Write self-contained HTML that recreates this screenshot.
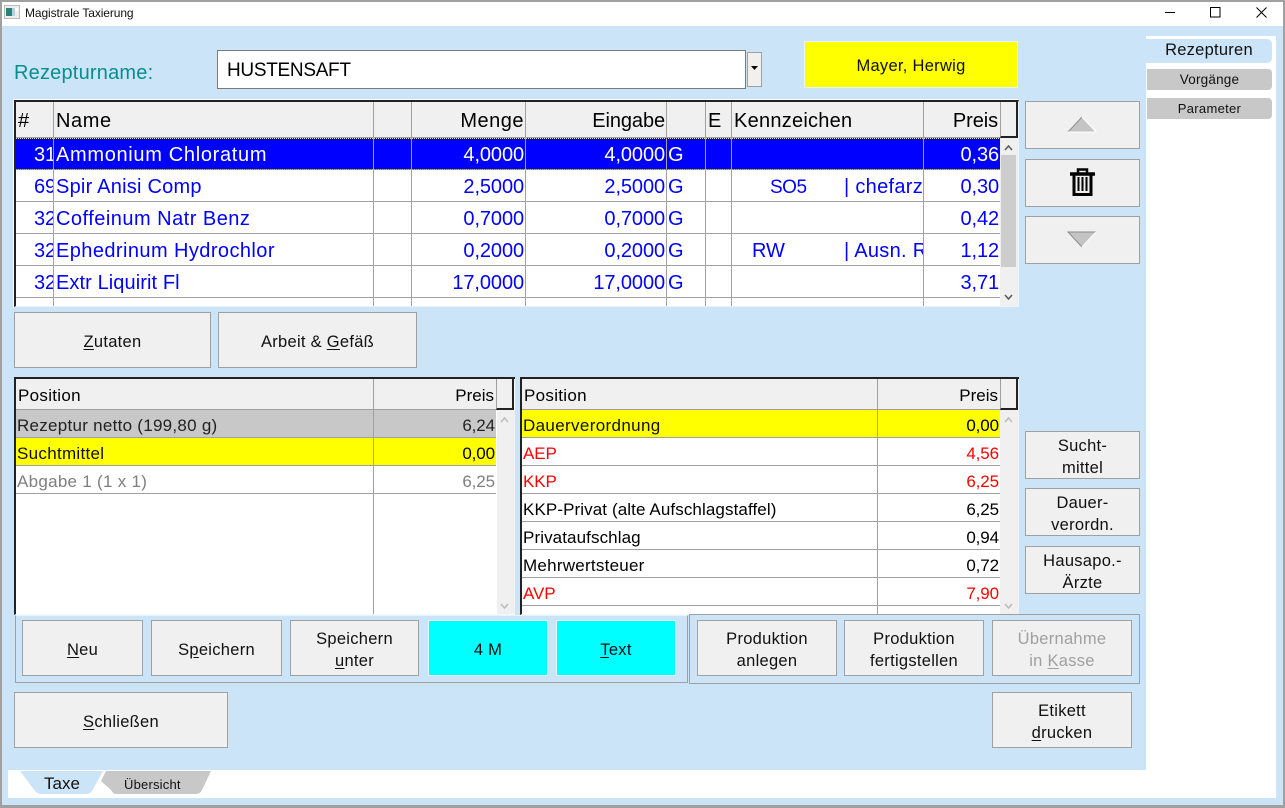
<!DOCTYPE html>
<html lang="de"><head><meta charset="utf-8"><title>Magistrale Taxierung</title>
<style>
html,body{margin:0;padding:0}
body{width:1285px;height:808px;overflow:hidden;position:relative;background:#fff;font-family:"Liberation Sans",sans-serif;color:#000}
div,span.a{position:absolute;box-sizing:border-box}
.t{white-space:nowrap;overflow:hidden}
.btn{background:#f0f0f0;border:1px solid #a0a0a0;display:flex;align-items:center;justify-content:center;text-align:center;font-size:16.500px;line-height:22px;color:#111;padding-top:3px;letter-spacing:.28px}
.cy{background:#0ff;border:1px solid #e6f6ff}
.dis{color:#a0a0a0}
u{text-underline-offset:2px}
.vl{width:1px;background:#a0a0a0}
.hl{height:1px;background:#a0a0a0}
.g{font-size:20px;height:34px;line-height:35px;color:#00f;letter-spacing:-.1px}
.r{text-align:right}
.l{font-size:17px;height:30px;line-height:31px;letter-spacing:-.1px}
.h1{font-size:20px;line-height:38px;height:36px;letter-spacing:-.1px}
.h2{font-size:17px;line-height:32px;height:30px;letter-spacing:.3px}
</style></head><body>
<!-- window frame -->
<div style="left:0;top:0;width:1285px;height:2px;background:#a0a0a0"></div>
<div style="left:0;top:0;width:2px;height:808px;background:#a0a0a0"></div>
<div style="left:1283px;top:0;width:2px;height:808px;background:#a0a0a0"></div>
<div style="left:0;top:805px;width:1285px;height:3px;background:#a0a0a0"></div>
<div style="left:2px;top:26px;width:1281px;height:779px;background:#cce4f7"></div>
<div style="left:1146px;top:36px;width:130px;height:762px;background:#fff"></div>
<div style="left:8px;top:770px;width:1268px;height:28px;background:#fff"></div>
<!-- title bar -->
<svg style="position:absolute;left:4px;top:5px" width="16" height="14"><rect x=".5" y=".5" width="15" height="13" fill="#eee" stroke="#bbb"/><rect x="2" y="3" width="6" height="8" fill="#2f7f78"/><rect x="8" y="3" width="3" height="8" fill="#b5cfe0"/><rect x="11" y="3" width="3" height="3" fill="#fff"/></svg>
<div class="t" style="left:25px;top:5px;font-size:12px;line-height:16px;color:#111;letter-spacing:-.1px">Magistrale Taxierung</div>
<svg style="position:absolute;left:1160px;top:4px" width="110" height="18" fill="none" stroke="#000"><path d="M5 8.500H15"/><rect x="50.500" y="3.500" width="9.500" height="9.500"/><path d="M96.500 3.500L106.500 13.500M106.500 3.500L96.500 13.500"/></svg>
<!-- header -->
<div class="t" style="left:14px;top:60px;font-size:20px;line-height:26px;color:#068e8e;letter-spacing:.2px">Rezepturname:</div>
<div style="left:217px;top:50px;width:529px;height:39px;background:#fff;border:1px solid #7a7a7a"></div>
<div class="t" style="left:227px;top:58px;font-size:19px;line-height:26px;color:#000;letter-spacing:-.3px">HUSTENSAFT</div>
<div style="left:747px;top:52px;width:15px;height:35px;background:#f0f0f0;border:1px solid #a0a0a0"></div>
<svg style="position:absolute;left:751px;top:66px" width="8" height="5"><path d="M0 0H7L3.500 4Z" fill="#000"/></svg>
<div class="btn" style="left:804px;top:41px;width:214px;height:47px;background:#ff0;border:1px solid #e6f6ff">Mayer, Herwig</div>
<!-- right tabs -->
<div class="t" style="left:1146px;top:39px;width:126px;height:24px;background:#cce4f7;border-radius:0 5px 5px 0;text-align:center;font-size:16.500px;line-height:23px;color:#111;letter-spacing:.25px">Rezepturen</div>
<div class="t" style="left:1147px;top:69px;width:125px;height:21px;background:#c8c8c8;border-radius:0 4px 4px 0;text-align:center;font-size:13.500px;line-height:22px;color:#111;letter-spacing:.2px">Vorgänge</div>
<div class="t" style="left:1147px;top:98px;width:125px;height:21px;background:#c8c8c8;border-radius:0 4px 4px 0;text-align:center;font-size:13px;line-height:22px;color:#111;letter-spacing:.3px">Parameter</div>
<!-- main grid -->
<div style="left:13px;top:99px;width:1006px;height:209px;border-top:1px solid #fff;border-left:1px solid #fff"></div>
<div style="left:14px;top:100px;width:1005px;height:207px;background:#fff;overflow:hidden;border-top:2px solid #222;border-left:2px solid #222;border-right:1px solid #e8f3fb;border-bottom:1px solid #e8f3fb">
<div style="left:0;top:0;width:1002px;height:36px;background:#f0f0f0"></div>
<div style="left:0;top:36px;width:984px;height:32px;background:#00f"></div>
<div style="left:0;top:36px;width:984px;height:1px;background:repeating-linear-gradient(90deg,#ff0 0 1px,#000 1px 2px)"></div>
<div style="left:0;top:67px;width:984px;height:1px;background:repeating-linear-gradient(90deg,#ff0 0 1px,#000 1px 2px)"></div>
<div class="vl" style="left:37px;top:0;height:205px"></div><div class="vl" style="left:357px;top:0;height:205px"></div><div class="vl" style="left:395px;top:0;height:205px"></div><div class="vl" style="left:509px;top:0;height:205px"></div><div class="vl" style="left:650px;top:0;height:205px"></div><div class="vl" style="left:689px;top:0;height:205px"></div><div class="vl" style="left:715px;top:0;height:205px"></div><div class="vl" style="left:907px;top:0;height:205px"></div>
<div class="hl" style="left:0;top:35px;width:984px;background:#a0a0a0"></div>
<div class="hl" style="left:0;top:67px;width:984px;opacity:.7"></div><div class="hl" style="left:0;top:99px;width:984px"></div><div class="hl" style="left:0;top:131px;width:984px"></div><div class="hl" style="left:0;top:163px;width:984px"></div><div class="hl" style="left:0;top:195px;width:984px"></div>
<div class="t h1" style="left:2px;top:0">#</div><div class="t h1" style="left:40px;top:0;letter-spacing:.6px">Name</div><div class="t h1 r" style="left:396px;width:112px;top:0;letter-spacing:.5px">Menge</div><div class="t h1 r" style="left:510px;width:139px;top:0">Eingabe</div><div class="t h1" style="left:692px;top:0">E</div><div class="t h1" style="left:718px;top:0;letter-spacing:.25px">Kennzeichen</div><div class="t h1 r" style="left:908px;width:74px;top:0">Preis</div>
<div class="t g" style="left:18px;width:19px;top:36px;color:#fff">31</div><div class="t g" style="left:40px;top:36px;color:#fff;letter-spacing:.68px">Ammonium Chloratum</div><div class="t g r" style="left:396px;width:112px;top:36px;color:#fff">4,0000</div><div class="t g r" style="left:510px;width:139px;top:36px;color:#fff">4,0000</div><div class="t g" style="left:652px;top:36px;color:#fff">G</div><div class="t g r" style="left:908px;width:75px;top:36px;color:#fff">0,36</div>
<div class="t g" style="left:18px;width:19px;top:68px">69</div><div class="t g" style="left:40px;top:68px;letter-spacing:.23px">Spir Anisi Comp</div><div class="t g r" style="left:396px;width:112px;top:68px">2,5000</div><div class="t g r" style="left:510px;width:139px;top:68px">2,5000</div><div class="t g" style="left:652px;top:68px">G</div><div class="t g" style="left:754px;top:68px;font-size:19px;letter-spacing:-.5px">SO5</div><div class="t g" style="left:828px;width:79px;top:68px;letter-spacing:.3px">| chefarzt</div><div class="t g r" style="left:908px;width:75px;top:68px">0,30</div>
<div class="t g" style="left:18px;width:19px;top:100px">32</div><div class="t g" style="left:40px;top:100px;letter-spacing:.48px">Coffeinum Natr Benz</div><div class="t g r" style="left:396px;width:112px;top:100px">0,7000</div><div class="t g r" style="left:510px;width:139px;top:100px">0,7000</div><div class="t g" style="left:652px;top:100px">G</div><div class="t g r" style="left:908px;width:75px;top:100px">0,42</div>
<div class="t g" style="left:18px;width:19px;top:132px">32</div><div class="t g" style="left:40px;top:132px;letter-spacing:.42px">Ephedrinum Hydrochlor</div><div class="t g r" style="left:396px;width:112px;top:132px">0,2000</div><div class="t g r" style="left:510px;width:139px;top:132px">0,2000</div><div class="t g" style="left:652px;top:132px">G</div><div class="t g" style="left:736px;top:132px">RW</div><div class="t g" style="left:828px;width:79px;top:132px;letter-spacing:.3px">| Ausn. Rp</div><div class="t g r" style="left:908px;width:75px;top:132px">1,12</div>
<div class="t g" style="left:18px;width:19px;top:164px">32</div><div class="t g" style="left:40px;top:164px;letter-spacing:.09px">Extr Liquirit Fl</div><div class="t g r" style="left:396px;width:112px;top:164px">17,0000</div><div class="t g r" style="left:510px;width:139px;top:164px">17,0000</div><div class="t g" style="left:652px;top:164px">G</div><div class="t g r" style="left:908px;width:75px;top:164px">3,71</div>
<div class="t g" style="left:40px;top:196px;letter-spacing:.4px">aqua purificata</div>
<!-- scrollbar -->
<div style="left:984px;top:36px;width:19px;height:168px;background:#f0f0f0"></div>
<div style="left:984px;top:0;width:18px;height:36px;background:#f0f0f0;border-left:1px solid #a0a0a0;border-right:2px solid #222;border-bottom:2px solid #222"></div>
<div style="left:985px;top:53px;width:15px;height:112px;background:#cdcdcd"></div>
<svg style="position:absolute;left:988px;top:42px" width="10" height="8" fill="none" stroke="#555" stroke-width="1.500"><path d="M1 6L4.500 2L8 6"/></svg>
<svg style="position:absolute;left:988px;top:191px" width="10" height="8" fill="none" stroke="#555" stroke-width="1.500"><path d="M1 2L4.500 6L8 2"/></svg>
</div>
<!-- side arrow buttons -->
<div class="btn" style="left:1025px;top:101px;width:115px;height:48px"></div>
<svg style="position:absolute;left:1066px;top:115px" width="32" height="19"><path d="M2 17L16 2L30 17Z" fill="#c4c4c4"/><path d="M2 17L16 2" stroke="#8c8c8c" fill="none"/><path d="M16 2L30 17H2" stroke="#fff" fill="none"/></svg>
<div class="btn" style="left:1025px;top:159px;width:115px;height:48px"></div>
<svg style="position:absolute;left:1068px;top:167px" width="29" height="30"><path d="M2 7H27" stroke="#000" stroke-width="3.500"/><path d="M10 6V2.500H19V6" fill="none" stroke="#000" stroke-width="2.500"/><path d="M6 8V27.500H23V8" fill="none" stroke="#000" stroke-width="3"/><path d="M10.500 10V24M14.500 10V24M18.500 10V24" stroke="#000" stroke-width="2"/></svg>
<div class="btn" style="left:1025px;top:216px;width:115px;height:48px"></div>
<svg style="position:absolute;left:1066px;top:230px" width="32" height="20"><path d="M2 2L16 17L30 2Z" fill="#c4c4c4"/><path d="M30 2H2L16 17" stroke="#8c8c8c" fill="none"/><path d="M16 17L30 2" stroke="#fff" fill="none"/></svg>
<!-- buttons -->
<div class="btn" style="left:14px;top:312px;width:197px;height:56px"><span><u>Z</u>utaten</span></div>
<div class="btn" style="left:218px;top:312px;width:199px;height:56px"><span>Arbeit &amp; <u>G</u>efäß</span></div>
<!-- left list -->
<div style="left:14px;top:377px;width:501px;height:238px;background:#fff;overflow:hidden;border-top:2px solid #222;border-left:2px solid #222;border-bottom:1px solid #f4fafe">
<div style="left:0;top:0;width:498px;height:30px;background:#f0f0f0"></div>
<div style="left:0;top:31px;width:480px;height:27px;background:#c8c8c8"></div>
<div style="left:0;top:59px;width:480px;height:27px;background:#ff0"></div>
<div class="hl" style="left:0;top:30px;width:480px"></div><div class="hl" style="left:0;top:58px;width:480px"></div><div class="hl" style="left:0;top:86px;width:480px"></div><div class="hl" style="left:0;top:114px;width:480px"></div>
<div class="vl" style="left:357px;top:0;height:236px"></div>
<div class="t h2" style="left:2px;top:1px">Position</div><div class="t h2 r" style="left:358px;width:120px;top:1px;letter-spacing:0">Preis</div>
<div class="t l" style="left:1px;top:31px;color:#222;letter-spacing:.27px">Rezeptur netto (199,80 g)</div><div class="t l r" style="left:358px;width:121px;top:31px;color:#222">6,24</div>
<div class="t l" style="left:1px;top:59px;color:#111;letter-spacing:.3px">Suchtmittel</div><div class="t l r" style="left:358px;width:121px;top:59px">0,00</div>
<div class="t l" style="left:1px;top:87px;color:#7f7f7f;letter-spacing:.28px">Abgabe 1 (1 x 1)</div><div class="t l r" style="left:358px;width:121px;top:87px;color:#7f7f7f">6,25</div>
<div style="left:481px;top:31px;width:18px;height:205px;background:#f0f0f0"></div>
<div style="left:480px;top:0;width:18px;height:31px;background:#f0f0f0;border-left:1px solid #a0a0a0;border-right:2px solid #222;border-bottom:2px solid #222"></div>
<svg style="position:absolute;left:484px;top:37px" width="10" height="8" fill="none" stroke="#bbb" stroke-width="1.500"><path d="M1 6L4.500 2L8 6"/></svg>
<svg style="position:absolute;left:484px;top:223px" width="10" height="8" fill="none" stroke="#bbb" stroke-width="1.500"><path d="M1 2L4.500 6L8 2"/></svg>
</div>
<!-- right list -->
<div style="left:520px;top:377px;width:499px;height:238px;background:#fff;overflow:hidden;border-top:2px solid #222;border-left:2px solid #222;border-bottom:1px solid #f4fafe">
<div style="left:0;top:0;width:497px;height:30px;background:#f0f0f0"></div>
<div style="left:0;top:31px;width:478px;height:27px;background:#ff0"></div>
<div class="hl" style="left:0;top:30px;width:478px"></div><div class="hl" style="left:0;top:58px;width:478px"></div><div class="hl" style="left:0;top:86px;width:478px"></div><div class="hl" style="left:0;top:114px;width:478px"></div><div class="hl" style="left:0;top:142px;width:478px"></div><div class="hl" style="left:0;top:170px;width:478px"></div><div class="hl" style="left:0;top:198px;width:478px"></div><div class="hl" style="left:0;top:226px;width:478px"></div>
<div class="vl" style="left:355px;top:0;height:236px"></div>
<div class="t h2" style="left:2px;top:1px">Position</div><div class="t h2 r" style="left:356px;width:120px;top:1px;letter-spacing:0">Preis</div>
<div class="t l" style="left:1px;top:31px;color:#111;letter-spacing:.35px">Dauerverordnung</div><div class="t l r" style="left:356px;width:121px;top:31px">0,00</div>
<div class="t l" style="left:1px;top:59px;color:#f00">AEP</div><div class="t l r" style="left:356px;width:121px;top:59px;color:#f00">4,56</div>
<div class="t l" style="left:1px;top:87px;color:#f00">KKP</div><div class="t l r" style="left:356px;width:121px;top:87px;color:#f00">6,25</div>
<div class="t l" style="left:1px;top:115px;letter-spacing:.1px">KKP-Privat (alte Aufschlagstaffel)</div><div class="t l r" style="left:356px;width:121px;top:115px">6,25</div>
<div class="t l" style="left:1px;top:143px;letter-spacing:.1px">Privataufschlag</div><div class="t l r" style="left:356px;width:121px;top:143px">0,94</div>
<div class="t l" style="left:1px;top:171px;letter-spacing:.25px">Mehrwertsteuer</div><div class="t l r" style="left:356px;width:121px;top:171px">0,72</div>
<div class="t l" style="left:1px;top:199px;color:#f00">AVP</div><div class="t l r" style="left:356px;width:121px;top:199px;color:#f00">7,90</div>
<div style="left:478px;top:31px;width:19px;height:205px;background:#f0f0f0"></div>
<div style="left:478px;top:0;width:18px;height:31px;background:#f0f0f0;border-left:1px solid #a0a0a0;border-right:2px solid #222;border-bottom:2px solid #222"></div>
<svg style="position:absolute;left:482px;top:37px" width="10" height="8" fill="none" stroke="#bbb" stroke-width="1.500"><path d="M1 6L4.500 2L8 6"/></svg>
<svg style="position:absolute;left:482px;top:223px" width="10" height="8" fill="none" stroke="#bbb" stroke-width="1.500"><path d="M1 2L4.500 6L8 2"/></svg>
</div>
<!-- side buttons -->
<div class="btn" style="left:1025px;top:431px;width:115px;height:48px">Sucht-<br>mittel</div>
<div class="btn" style="left:1025px;top:488px;width:115px;height:48px">Dauer-<br>verordn.</div>
<div class="btn" style="left:1025px;top:546px;width:115px;height:48px">Hausapo.-<br>Ärzte</div>
<!-- bottom groups -->
<div style="left:15px;top:615px;width:673px;height:68px;border:1px solid #a0a0a0;border-top:1px solid #e8f3fb"></div>
<div style="left:689px;top:614px;width:451px;height:70px;border:1px solid #a0a0a0"></div>
<div class="btn" style="left:22px;top:620px;width:121px;height:56px"><span><u>N</u>eu</span></div>
<div class="btn" style="left:151px;top:620px;width:131px;height:56px"><span>S<u>p</u>eichern</span></div>
<div class="btn" style="left:290px;top:620px;width:129px;height:56px"><span>Speichern<br><u>u</u>nter</span></div>
<div class="btn cy" style="left:428px;top:620px;width:120px;height:56px">4 M</div>
<div class="btn cy" style="left:556px;top:620px;width:120px;height:56px"><span><u>T</u>ext</span></div>
<div class="btn" style="left:697px;top:620px;width:140px;height:56px">Produktion<br>anlegen</div>
<div class="btn" style="left:844px;top:620px;width:140px;height:56px">Produktion<br>fertigstellen</div>
<div class="btn dis" style="left:992px;top:620px;width:140px;height:56px"><span>Übernahme<br>in <u>K</u>asse</span></div>
<div class="btn" style="left:14px;top:692px;width:214px;height:56px"><span><u>S</u>chließen</span></div>
<div class="btn" style="left:992px;top:692px;width:140px;height:56px"><span>Etikett<br><u>d</u>rucken</span></div>
<!-- bottom tabs -->
<svg style="position:absolute;left:8px;top:770px" width="210" height="26"><path d="M12 1H95L84 21Q82 24 78 24H34Q29 24 27 21Z" fill="#cce4f7"/><path d="M98 1H203L194 20Q192 24 188 24H108Q105 24 103 20L93 11Z" fill="#c8c8c8"/></svg>
<div class="t" style="left:44px;top:773px;font-size:17px;line-height:21px;color:#111">Taxe</div>
<div class="t" style="left:124px;top:776px;font-size:13px;line-height:17px;color:#111;letter-spacing:.2px">Übersicht</div>
</body></html>
